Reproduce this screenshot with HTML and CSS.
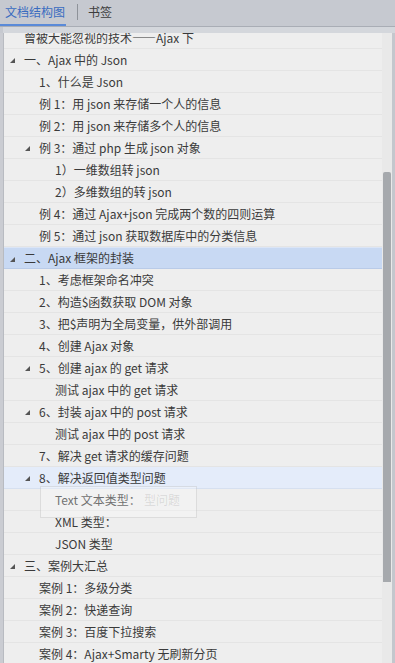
FILE: index.html
```html
<!DOCTYPE html>
<html lang="zh-CN">
<head>
    <meta charset="UTF-8">
    <title>文档结构图</title>
    <link rel="stylesheet" href="styles.css">
</head>
<body>
    <div class="panel">
        <header class="tabs">
            <div class="tab tab-active">文档结构图</div>
            <span class="tab-sep"></span>
            <div class="tab">书签</div>
        </header>
        <div class="tabs-band"></div>

        <div class="body">
            <div class="viewport">
                <ul class="tree">
                    <li class="row lv0">曾被大能忽视的技术——Ajax 下</li>
                    <li class="row lv0 open">一、Ajax 中的 Json</li>
                    <li class="row lv1">1、什么是 Json</li>
                    <li class="row lv1">例 1：用 json 来存储一个人的信息</li>
                    <li class="row lv1">例 2：用 json 来存储多个人的信息</li>
                    <li class="row lv1 open">例 3：通过 php 生成 json 对象</li>
                    <li class="row lv2">1）一维数组转 json</li>
                    <li class="row lv2">2）多维数组的转 json</li>
                    <li class="row lv1">例 4：通过 Ajax+json 完成两个数的四则运算</li>
                    <li class="row lv1">例 5：通过 json 获取数据库中的分类信息</li>
                    <li class="row lv0 open selected">二、Ajax 框架的封装</li>
                    <li class="row lv1">1、考虑框架命名冲突</li>
                    <li class="row lv1">2、构造$函数获取 DOM 对象</li>
                    <li class="row lv1">3、把$声明为全局变量，供外部调用</li>
                    <li class="row lv1">4、创建 Ajax 对象</li>
                    <li class="row lv1 open">5、创建 ajax 的 get 请求</li>
                    <li class="row lv2">测试 ajax 中的 get 请求</li>
                    <li class="row lv1 open">6、封装 ajax 中的 post 请求</li>
                    <li class="row lv2">测试 ajax 中的 post 请求</li>
                    <li class="row lv1">7、解决 get 请求的缓存问题</li>
                    <li class="row lv1 open hover">8、解决返回值类型问题</li>
                    <li class="row lv2">Text 文本类型：</li>
                    <li class="row lv2">XML 类型：</li>
                    <li class="row lv2">JSON 类型</li>
                    <li class="row lv0 open">三、案例大汇总</li>
                    <li class="row lv1">案例 1：多级分类</li>
                    <li class="row lv1">案例 2：快递查询</li>
                    <li class="row lv1">案例 3：百度下拉搜索</li>
                    <li class="row lv1">案例 4：Ajax+Smarty 无刷新分页</li>
                </ul>
                <div class="drag-ghost"><span>型问题</span></div>
            </div>
            <div class="scrollbar">
                <div class="thumb"></div>
            </div>
        </div>
    </div>
</body>
</html>
```

FILE: styles.css
```css
/* Base */
* {
    margin: 0;
    padding: 0;
    box-sizing: border-box;
}

body {
    font-family: "Noto Sans CJK SC", "Noto Sans", sans-serif;
    font-size: 12px;
    color: #3a3a3a;
    background: #eeeeee;
    width: 395px;
    height: 663px;
    overflow: hidden;
}

.panel {
    display: flex;
    flex-direction: column;
    height: 663px;
}

/* Tabs */
.tabs {
    height: 27px;
    background: #c6c9d0;
    border-bottom: 1px solid #a9adb5;
    display: flex;
    align-items: stretch;
}

.tab {
    padding: 0 4px;
    line-height: 24px;
    font-size: 12px;
    color: #3c3c3c;
    white-space: nowrap;
}

.tab-active {
    padding: 0 1px 0 5px;
    color: #3a6cc0;
    border-bottom: 2px solid #5a8ad8;
}

.tab-sep {
    width: 1px;
    height: 16px;
    margin: 4px 6px 0 11px;
    background: #8e9299;
}

.tabs-band {
    height: 6px;
    background: #d4d7dc;
    border-left: 3px solid #c6c9d0;
}

/* Tree body */
.body {
    flex: 1;
    display: flex;
    min-height: 0;
    border-left: 3px solid #caccd2;
    border-right: 3px solid #c4c7cd;
}

.viewport {
    flex: 1;
    position: relative;
    overflow: hidden;
    border-left: 1px solid #b8bbc1;
}

.tree {
    list-style: none;
    margin-top: -6px;
}

.row {
    position: relative;
    height: 22px;
    line-height: 21px;
    border-bottom: 1px solid #e4e4e4;
    white-space: nowrap;
}

.lv0 { padding-left: 20px; }
.lv1 { padding-left: 35px; }
.lv2 { padding-left: 51px; }

.open::before {
    content: "";
    position: absolute;
    top: 9px;
    width: 0;
    height: 0;
    border-left: 5px solid transparent;
    border-bottom: 5px solid #555555;
}

.lv0.open::before { left: 6px; }
.lv1.open::before { left: 21px; }

.selected {
    background: #c8d9f3;
    border-top: 1px solid #dbe5f6;
    border-bottom: 1px solid #b9cbe8;
    line-height: 19px;
}

.hover {
    background: #e4ecfa;
    border-bottom-color: #d6e0f0;
}

/* Drag ghost */
.drag-ghost {
    position: absolute;
    left: 36px;
    top: 453px;
    width: 157px;
    height: 32px;
    background: rgba(255, 255, 255, 0.28);
    border: 1px solid rgba(120, 120, 120, 0.18);
}

.drag-ghost span {
    display: block;
    padding: 4px 0 0 103px;
    color: rgba(80, 80, 80, 0.16);
    white-space: nowrap;
}

/* Scrollbar */
.scrollbar {
    width: 10px;
    background: #e9e9e9;
    padding: 139px 1px 0 1px;
}

.thumb {
    height: 410px;
    background: #a6a9ad;
    border-radius: 2px 2px 0 0;
}
```
